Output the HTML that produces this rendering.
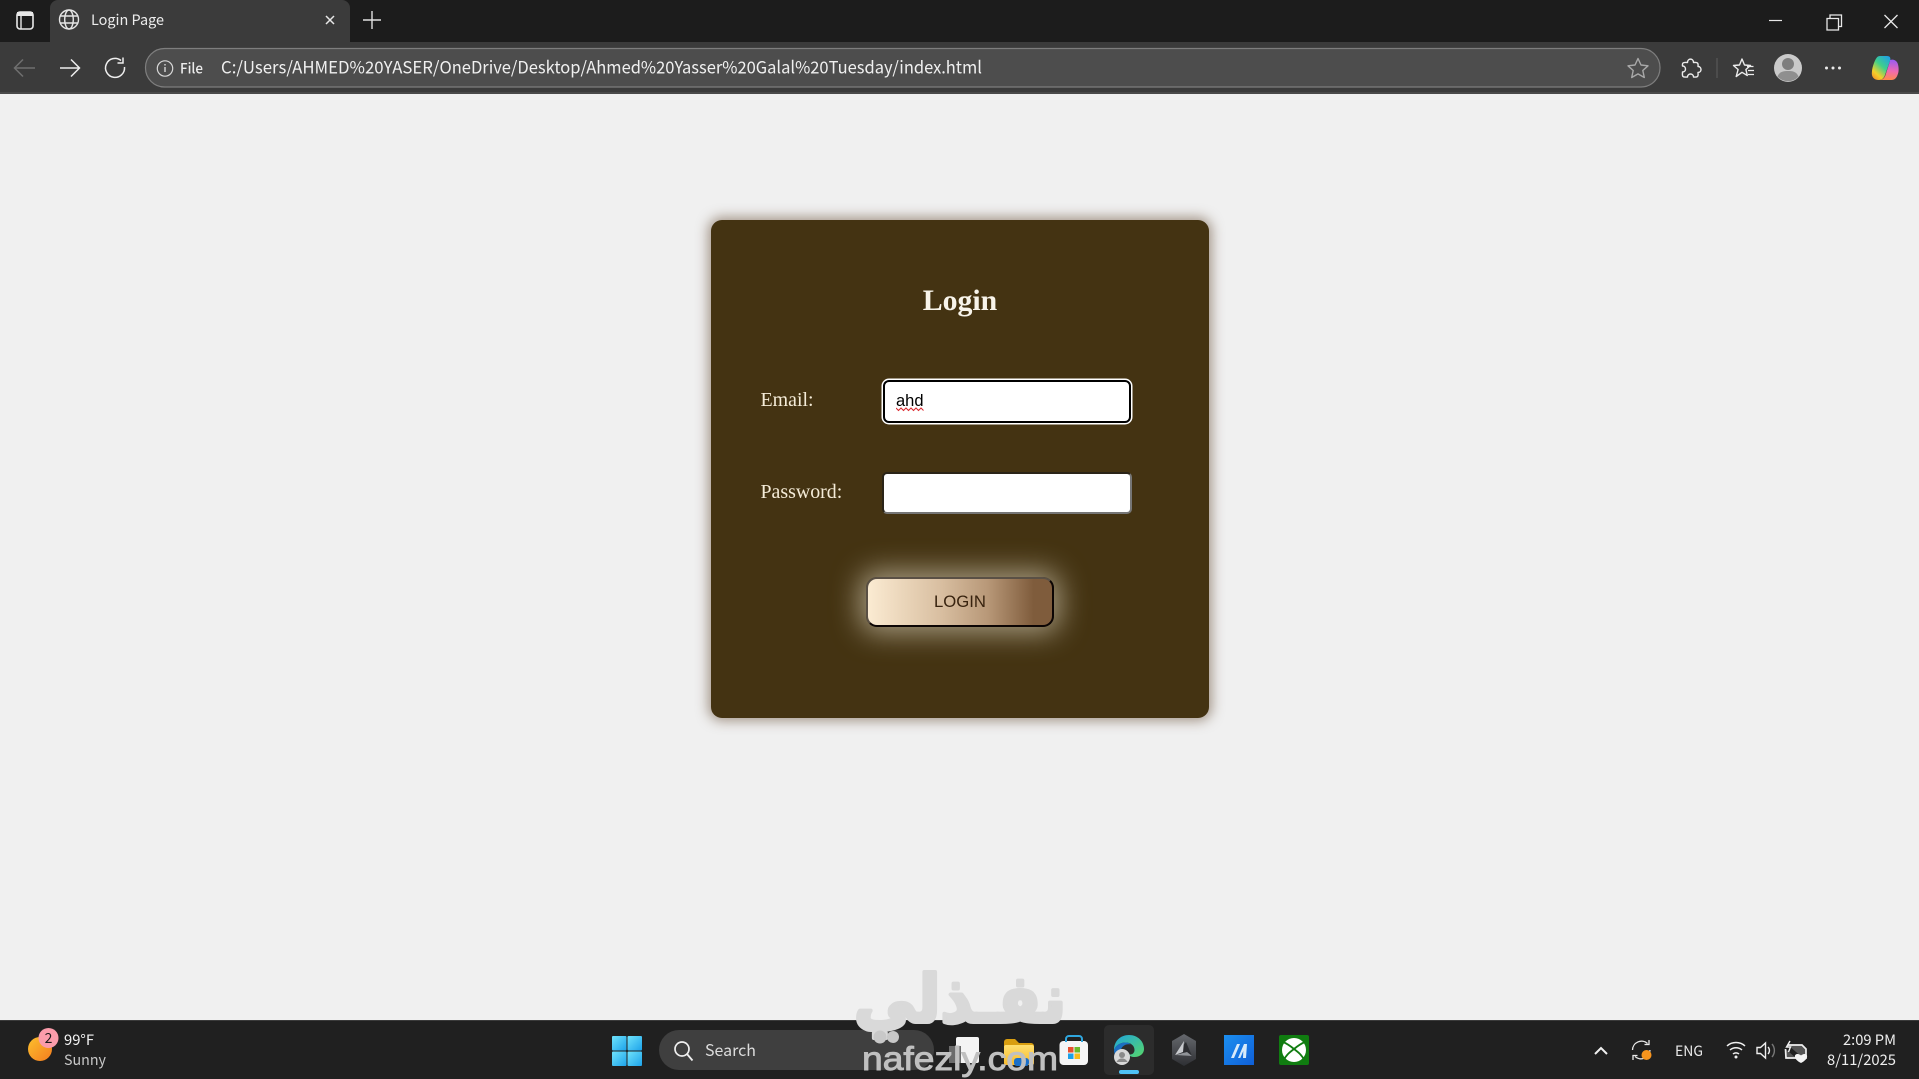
<!DOCTYPE html>
<html lang="en">
<head>
<meta charset="utf-8">
<title>Login Page</title>
<style>
html,body{margin:0;padding:0;width:1919px;height:1079px;overflow:hidden;background:#f0f0f0}
#card{position:absolute;left:711px;top:220px;width:498px;height:498px;background:#443312;border-radius:11px;box-shadow:0 0 12px 3px rgba(90,62,35,.5)}
h2{position:absolute;left:710px;top:284px;width:500px;margin:0;text-align:center;font:bold 29.8px/34px "Liberation Serif",serif;color:#f8f4ea}
label{position:absolute;left:760.5px;font:19.9px/24px "Liberation Serif",serif;color:#f5ecd8}
input{position:absolute;box-sizing:border-box;margin:0;background:#fff;font:16.5px "Liberation Sans",sans-serif;color:#000;outline:none}
#email{left:883px;top:379.500px;width:248px;height:43px;border:2px solid #000;border-radius:6px;padding:0 11px;box-shadow:0 0 0 1.500px #fff}
#pass{left:882px;top:472px;width:249.500px;height:42px;border:2px solid;border-color:#2a2418 #767676 #767676 #2a2418;border-radius:5px}
#btn{position:absolute;left:866px;top:577px;width:188px;height:50px;box-sizing:border-box;border:2px solid;border-color:#5a5045 #0c0504 #0c0504 #5a5045;border-radius:11px;background:linear-gradient(90deg,#fbebd2 0%,#d8bea0 40%,#b89878 65%,#7f5c3c 90%,#7f5c3c 100%);box-shadow:0 0 28px 6px rgba(255,250,230,.52);font:16.7px "Liberation Sans",sans-serif;color:#38230f;padding:0}
svg#ui{position:absolute;left:0;top:0;pointer-events:none}
svg text{font-family:"Noto Sans CJK JP","Liberation Sans",sans-serif}
</style>
</head>
<body>
<div id="card"></div>
<h2>Login</h2>
<label style="top:388px">Email:</label>
<input id="email" type="text" value="ahd" spellcheck="false">
<label style="top:480px">Password:</label>
<input id="pass" type="password">
<button id="btn">LOGIN</button>

<svg id="ui" width="1919" height="1079" viewBox="0 0 1919 1079" xmlns="http://www.w3.org/2000/svg">
<defs>
<linearGradient id="sun" x1="0" y1="0" x2="1" y2="1"><stop offset="0" stop-color="#fbc02d"/><stop offset="1" stop-color="#f57c1f"/></linearGradient>
<linearGradient id="cp1" x1="0.9" y1="0" x2="0.2" y2="1"><stop offset="0" stop-color="#1f9fe8"/><stop offset=".45" stop-color="#3fd08a"/><stop offset=".8" stop-color="#f5d02a"/><stop offset="1" stop-color="#f59a2a"/></linearGradient>
<linearGradient id="cp2" x1="0.5" y1="0" x2="0.4" y2="1"><stop offset="0" stop-color="#9a5cf0"/><stop offset=".55" stop-color="#f06ab0"/><stop offset="1" stop-color="#ff8a4a"/></linearGradient>
<linearGradient id="edge" x1="0" y1="0" x2="1" y2="1"><stop offset="0" stop-color="#1fa5dc"/><stop offset="1" stop-color="#57d66a"/></linearGradient>
<linearGradient id="win" x1="0" y1="0" x2="1" y2="1"><stop offset="0" stop-color="#6fe3fb"/><stop offset="1" stop-color="#1da3ea"/></linearGradient>
<linearGradient id="blueapp" x1="0" y1="0" x2="1" y2="1"><stop offset="0" stop-color="#1c8ff0"/><stop offset="1" stop-color="#0f5fd8"/></linearGradient>
<linearGradient id="hex" x1="0" y1="0" x2="0" y2="1"><stop offset="0" stop-color="#66696e"/><stop offset="1" stop-color="#2e2f33"/></linearGradient>
<linearGradient id="folder" x1="0" y1="0" x2="0" y2="1"><stop offset="0" stop-color="#ffe070"/><stop offset="1" stop-color="#f7b92c"/></linearGradient>
</defs>

<!-- tab strip -->
<rect x="0" y="0" width="1919" height="42" fill="#1c1c1c"/>
<path d="M50 42V8a8 8 0 0 1 8-8H342a8 8 0 0 1 8 8V42Z" fill="#3b3b3b"/>
<rect x="17" y="12" width="16" height="17" rx="3" fill="none" stroke="#e8e8e8" stroke-width="1.6"/>
<path d="M17 12h16v4H17Z" fill="#e8e8e8"/><path d="M21 16v13" stroke="#e8e8e8" stroke-width="1.400"/>
<g fill="none" stroke="#e4e4e4" stroke-width="1.400">
<circle cx="69" cy="19.500" r="9.500"/><ellipse cx="69" cy="19.500" rx="4.300" ry="9.500"/><path d="M60 16h18M60 23h18"/>
</g>
<text x="91" y="25" font-size="14.500" fill="#ececec" textLength="73" lengthAdjust="spacingAndGlyphs">Login Page</text>
<path d="M326 16l8 8M334 16l-8 8" stroke="#e8e8e8" stroke-width="1.500" fill="none"/>
<path d="M372 11v18M363 20h18" stroke="#e0e0e0" stroke-width="1.400" fill="none"/>
<path d="M1769 20.500h13" stroke="#e8e8e8" stroke-width="1.200"/>
<path d="M1827 18.500h11.500v11.500h-11.500ZM1830 18v-3h11.500v11.500h-2.700" fill="none" stroke="#e8e8e8" stroke-width="1.300"/>
<path d="M1884.500 15l13 13M1897.500 15l-13 13" stroke="#e8e8e8" stroke-width="1.300"/>

<!-- toolbar -->
<rect x="0" y="42" width="1919" height="50" fill="#3b3b3b"/>
<rect x="0" y="92" width="1919" height="2" fill="#4a4a4a"/>
<path d="M35 68H15M23 59.500l-8.500 8.500 8.500 8.500" fill="none" stroke="#6f6f6f" stroke-width="1.500"/>
<path d="M60 68H79.500M71 59.500l8.500 8.500-8.500 8.500" fill="none" stroke="#eeeeee" stroke-width="1.500"/>
<path d="M121 60.500a9.500 9.500 0 1 0 3.500 6.500M123 57.500v5.500h-5.500" fill="none" stroke="#eeeeee" stroke-width="1.500"/>
<rect x="145.500" y="48.500" width="1514.500" height="38.500" rx="19" fill="#4d4d4d" stroke="#7e7e7e" stroke-width="1.200"/>
<circle cx="165" cy="68.500" r="7.700" fill="none" stroke="#d8d8d8" stroke-width="1.200"/>
<path d="M165 67v5M165 64v1.500" stroke="#d8d8d8" stroke-width="1.400"/>
<text x="180" y="73.500" font-size="14" font-weight="500" fill="#ececec" textLength="23" lengthAdjust="spacingAndGlyphs">File</text>
<text x="221" y="73.500" font-size="17" fill="#f0f0f0" textLength="218.500" lengthAdjust="spacingAndGlyphs">C:/Users/AHMED%20YASER/</text>
<text x="439.500" y="73.500" font-size="17" fill="#f0f0f0" textLength="542.500" lengthAdjust="spacingAndGlyphs">OneDrive/Desktop/Ahmed%20Yasser%20Galal%20Tuesday/index.html</text>
<path d="M1638 58.500l3 6.500 7 .8-5.200 4.700 1.500 7-6.300-3.600-6.300 3.600 1.500-7-5.200-4.700 7-.8Z" fill="none" stroke="#a8a8a8" stroke-width="1.400" stroke-linejoin="round"/>
<path d="M1687.500 62.500c0-4.500 6-4.500 6 0 2 0 3-.5 4 .5s.5 2.500.5 3.500c4 0 4 6 0 6 0 1 .5 3-.5 4s-2 .5-4 .5c0-4-6-4-6 0-2 0-3.500.5-4.500-.5s-.5-2.500-.5-4.500c4 0 4-6 0-6 0-1.500-.5-2 .5-3s2.500-.5 4.500-.5Z" fill="none" stroke="#ececec" stroke-width="1.400" stroke-linejoin="round"/>
<path d="M1717 58v20" stroke="#5e5e5e" stroke-width="1"/>
<path d="M1742 59l2.500 6 6 .5-4.600 4 1.400 6-5.300-3.200-5.800 4.200 1.900-7-4.600-4 6-.5Z" fill="none" stroke="#ececec" stroke-width="1.400" stroke-linejoin="round"/>
<path d="M1747 66.500h6.500M1748 70.500h6M1748 74.500h6" stroke="#ececec" stroke-width="1.300"/>
<circle cx="1788" cy="68" r="14" fill="#cacaca"/>
<circle cx="1788" cy="64" r="6" fill="#7e7e7e"/>
<path d="M1777.500 76.500c2-5 6-5.500 10.500-5.500s8.500 .5 10.500 5.500a14 14 0 0 1-21 0Z" fill="#8f8f8f"/>
<circle cx="1826.500" cy="68" r="1.500" fill="#eaeaea"/><circle cx="1833" cy="68" r="1.500" fill="#eaeaea"/><circle cx="1839.500" cy="68" r="1.500" fill="#eaeaea"/>
<path d="M1880 56h7c3 0 4 2 3 5l-5 14c-1 3-3 5-6 5-5 0-8-3-7-9 .5-5 3-11 4.500-13 1-1.500 2-2 3.500-2Z" fill="url(#cp1)"/>
<path d="M1890 60c3-1 6 0 7.500 3 1.500 4 1.500 9 0 12-1 3-3 5-6 5h-12c3 0 5-2 6-5l4.500-14Z" fill="url(#cp2)"/>

<!-- taskbar -->
<rect x="0" y="1020" width="1919" height="59" fill="#202020"/>
<rect x="0" y="1020" width="1919" height="1" fill="#3a3a3a"/>
<circle cx="40" cy="1049" r="12" fill="url(#sun)"/>
<circle cx="48.500" cy="1038" r="10" fill="#fb9cab"/>
<text x="48.500" y="1043" font-size="14" text-anchor="middle" fill="#1a1a1a">2</text>
<text x="64" y="1045" font-size="14.500" fill="#f2f2f2" textLength="30" lengthAdjust="spacingAndGlyphs">99°F</text>
<text x="64" y="1065" font-size="14.500" fill="#c8c8c8" textLength="42" lengthAdjust="spacingAndGlyphs">Sunny</text>

<g fill="url(#win)">
<rect x="612" y="1036" width="14.500" height="14.500" rx="1"/><rect x="627.500" y="1036" width="14.500" height="14.500" rx="1"/>
<rect x="612" y="1051.500" width="14.500" height="14.500" rx="1"/><rect x="627.500" y="1051.500" width="14.500" height="14.500" rx="1"/>
</g>
<rect x="659" y="1030" width="275" height="40" rx="20" fill="#3f3f3f"/>
<circle cx="682" cy="1049" r="7" fill="none" stroke="#f0f0f0" stroke-width="1.700"/>
<path d="M687 1054l5.500 6.500" stroke="#f0f0f0" stroke-width="1.800"/>
<text x="705" y="1056" font-size="16" fill="#dcdcdc" textLength="51" lengthAdjust="spacingAndGlyphs">Search</text>

<rect x="956" y="1037" width="23" height="26" rx="2" fill="#f4f4f4"/>
<rect x="949" y="1046" width="12" height="17" fill="#6b6b6b"/>
<path d="M1004 1042a3 3 0 0 1 3-3h8l4 4h12a3 3 0 0 1 3 3v17h-30Z" fill="#d99e10"/>
<rect x="1004" y="1045" width="30" height="20" rx="2" fill="url(#folder)"/>
<rect x="1014" y="1058" width="15" height="8" rx="3" fill="#1a6fc9"/>
<rect x="1059.500" y="1041" width="28.500" height="24" rx="4" fill="#f5f5f5"/>
<path d="M1066 1042v-3a3 3 0 0 1 3-3h10a3 3 0 0 1 3 3v3" fill="none" stroke="#2fa7df" stroke-width="2"/>
<rect x="1068" y="1047" width="5.500" height="5.500" fill="#e8502e"/><rect x="1074.500" y="1047" width="5.500" height="5.500" fill="#6cbb2a"/>
<rect x="1068" y="1053.500" width="5.500" height="5.500" fill="#1da1e8"/><rect x="1074.500" y="1053.500" width="5.500" height="5.500" fill="#f9bb1c"/>

<rect x="1104" y="1025" width="50" height="50" rx="5" fill="#2c2c2c"/>
<path d="M1114 1050c0-9 6.500-15 15-15 9 0 15 6.500 15 14 0 5-4.500 8-9.500 8-3 0-5-1-6-2.500 3 .5 6-1 6-4.500 0-4.500-4-7.500-9-7.500-6 0-10 3.500-11.500 7.500Z" fill="url(#edge)"/>
<path d="M1114 1050c1.500-4 5.500-7.500 11.500-7.500 3 0 4.500 1 5 2-5-1-10 2-10 8 0 4 2 8 7 10-7 .5-13.500-5-13.500-12.500Z" fill="#1b6fc2"/>
<circle cx="1122" cy="1057" r="8" fill="#d8d8d8"/><circle cx="1122" cy="1055" r="3" fill="#8a8a8a"/><path d="M1116.500 1062c1.500-3 3.500-3.500 5.500-3.500s4 .5 5.500 3.500" fill="#8a8a8a"/>
<rect x="1119" y="1070" width="20" height="4" rx="2" fill="#4fc3f7"/>

<path d="M1184 1034l12 7v18l-12 7-12-7v-18Z" fill="url(#hex)"/>
<path d="M1186 1042l6 14-17-1Z" fill="#2c2d31"/>
<path d="M1184 1041l-9 14 8-3Z" fill="#c8cace"/>
<path d="M1175 1055l17 1-5-4Z" fill="#909398"/>

<rect x="1224" y="1035" width="30" height="30" fill="url(#blueapp)"/>
<path d="M1231 1058l6-14h3l-6 14ZM1238 1058l6-14h3l-1 14h-3l.3-7-3 7Z" fill="#d8eafa"/>

<rect x="1279" y="1035" width="30" height="30" rx="2" fill="#107c10"/>
<circle cx="1294" cy="1050" r="12" fill="#fff"/>
<g fill="none" stroke="#107c10" stroke-width="1.800">
<path d="M1283 1042c5 2 11 7 11 7s6-5 11-7"/>
<path d="M1284 1060c2-5 6-8 10-11 4 3 8 6 10 11"/>
</g>

<path d="M1595 1054l6-6 6 6" fill="none" stroke="#f0f0f0" stroke-width="2"/>
<g fill="none" stroke="#eaeaea" stroke-width="1.300">
<path d="M1632.500 1050a9 9 0 0 1 15-6.500M1650 1050a9 9 0 0 1-15 6.500"/>
<path d="M1649 1040v4.500h-4.500M1633 1060v-4.500h4.500"/>
</g>
<circle cx="1646.500" cy="1055" r="5" fill="#f7941d"/>
<text x="1675" y="1056" font-size="14.500" fill="#e8e8e8" textLength="28" lengthAdjust="spacingAndGlyphs">ENG</text>
<g fill="none" stroke="#f0f0f0" stroke-width="1.500">
<path d="M1727 1046a13.500 13.500 0 0 1 18 0M1730 1050a9 9 0 0 1 12 0M1733 1054a4.500 4.500 0 0 1 6 0"/>
</g>
<circle cx="1736" cy="1057" r="1.500" fill="#f0f0f0"/>
<path d="M1757 1047.500h3.500l5-4.500v15l-5-4.500h-3.500Z" fill="none" stroke="#eeeeee" stroke-width="1.400"/>
<path d="M1768 1047a5 5 0 0 1 0 7" fill="none" stroke="#eeeeee" stroke-width="1.400"/>
<path d="M1772 1044a10 10 0 0 1 0 13" fill="none" stroke="#777" stroke-width="1.400"/>
<path d="M1788 1045h14l4 4v9h-3M1796 1058h-10l-.5-9" fill="#555" stroke="#f0f0f0" stroke-width="1.700"/>
<path d="M1790 1041l-3.500 6h4l-2 5" fill="none" stroke="#f0f0f0" stroke-width="1.400"/>
<path d="M1801 1063c-8-4-7-9-3.500-9 1.500 0 3 1 3.500 1.500.5-.5 2-1.500 3.500-1.500 3.500 0 4.500 5-3.500 9Z" fill="#f4f4f4"/>
<text x="1896" y="1045" font-size="14.500" text-anchor="end" fill="#eeeeee" textLength="53" lengthAdjust="spacingAndGlyphs">2:09 PM</text>
<text x="1896" y="1065" font-size="14.500" text-anchor="end" fill="#eeeeee" textLength="69" lengthAdjust="spacingAndGlyphs">8/11/2025</text>

<!-- watermark -->
<text x="960" y="1022" text-anchor="middle" direction="rtl" font-size="66" font-weight="bold" fill="#d9d9d9" stroke="#d9d9d9" stroke-width="4" stroke-linejoin="round" textLength="212" lengthAdjust="spacingAndGlyphs" style="font-family:'DejaVu Sans',sans-serif">نفـذلي</text>
<circle cx="880" cy="1037" r="6.500" fill="#c8c8c8"/><circle cx="893" cy="1037" r="6" fill="#c8c8c8"/>
<text x="862" y="1070" font-size="33" fill="#c0c0c0" stroke="#c0c0c0" stroke-width=".9" textLength="196" lengthAdjust="spacingAndGlyphs" style="font-family:'Liberation Sans',sans-serif">nafezly.com</text>
</svg>

<svg width="32" height="6" viewBox="0 0 32 6" style="position:absolute;left:896px;top:406px;pointer-events:none" xmlns="http://www.w3.org/2000/svg"><path d="M0 2l2.500 2.500L5 2l2.500 2.500L10 2l2.500 2.500L15 2l2.500 2.500L20 2l2.500 2.500L25 2l2.500 2.500" fill="none" stroke="#d9262c" stroke-width="1"/></svg>
</body>
</html>
